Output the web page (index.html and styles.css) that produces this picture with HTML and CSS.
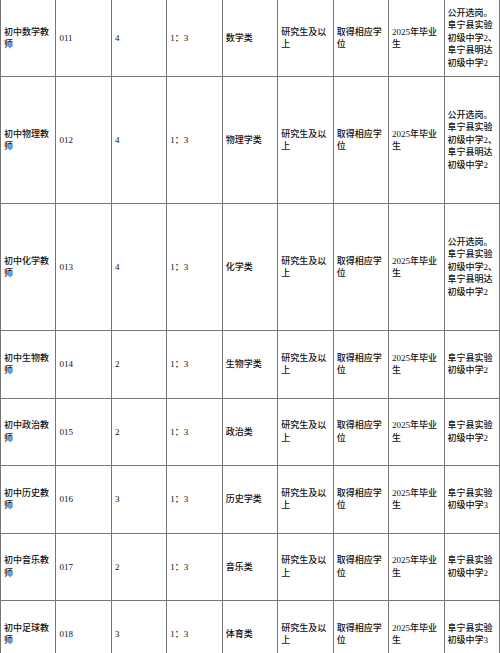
FILE: index.html
```html
<!DOCTYPE html>
<html lang="zh-CN">
<head>
<meta charset="utf-8">
<title>岗位表</title>
<link rel="stylesheet" href="styles.css">
</head>
<body>
<table class="jobs">
  <colgroup>
    <col><col><col><col><col><col><col><col><col>
  </colgroup>
  <tbody>
    <tr class="row-first">
      <td>初中数学教师</td><td>011</td><td>4</td><td>1：3</td><td>数学类</td><td>研究生及以上</td><td>取得相应学位</td><td>2025年毕业生</td>
      <td>公开选岗。<br>阜宁县实验<br>初级中学2、<br>阜宁县明达<br>初级中学2</td>
    </tr>
    <tr class="row-tall">
      <td>初中物理教师</td><td>012</td><td>4</td><td>1：3</td><td>物理学类</td><td>研究生及以上</td><td>取得相应学位</td><td>2025年毕业生</td>
      <td>公开选岗。<br>阜宁县实验<br>初级中学2、<br>阜宁县明达<br>初级中学2</td>
    </tr>
    <tr class="row-tall">
      <td>初中化学教师</td><td>013</td><td>4</td><td>1：3</td><td>化学类</td><td>研究生及以上</td><td>取得相应学位</td><td>2025年毕业生</td>
      <td>公开选岗。<br>阜宁县实验<br>初级中学2、<br>阜宁县明达<br>初级中学2</td>
    </tr>
    <tr class="row-short">
      <td>初中生物教师</td><td>014</td><td>2</td><td>1：3</td><td>生物学类</td><td>研究生及以上</td><td>取得相应学位</td><td>2025年毕业生</td>
      <td>阜宁县实验<br>初级中学2</td>
    </tr>
    <tr class="row-short">
      <td>初中政治教师</td><td>015</td><td>2</td><td>1：3</td><td>政治类</td><td>研究生及以上</td><td>取得相应学位</td><td>2025年毕业生</td>
      <td>阜宁县实验<br>初级中学2</td>
    </tr>
    <tr class="row-short">
      <td>初中历史教师</td><td>016</td><td>3</td><td>1：3</td><td>历史学类</td><td>研究生及以上</td><td>取得相应学位</td><td>2025年毕业生</td>
      <td>阜宁县实验<br>初级中学3</td>
    </tr>
    <tr class="row-short">
      <td>初中音乐教师</td><td>017</td><td>2</td><td>1：3</td><td>音乐类</td><td>研究生及以上</td><td>取得相应学位</td><td>2025年毕业生</td>
      <td>阜宁县实验<br>初级中学2</td>
    </tr>
    <tr class="row-short">
      <td>初中足球教师</td><td>018</td><td>3</td><td>1：3</td><td>体育类</td><td>研究生及以上</td><td>取得相应学位</td><td>2025年毕业生</td>
      <td>阜宁县实验<br>初级中学3</td>
    </tr>
  </tbody>
</table>
</body>
</html>
```
FILE: styles.css
```css
html, body {
  margin: 0;
  padding: 0;
  background: #ffffff;
}

body {
  font-family: "Liberation Serif", "Noto Sans CJK SC", serif;
  font-size: 9px;
  font-weight: 500;
  line-height: 12.5px;
  color: #111111;
  overflow: hidden;
}

.jobs {
  width: 500px;
  table-layout: fixed;
  border-collapse: collapse;
}

.jobs td {
  border: 1px solid #757575;
  padding: 0 2px 0 3px;
  vertical-align: middle;
  text-align: left;
  word-break: break-all;
}

.row-first td {
  border-top: none;
  height: 76px;
}

.row-tall td {
  height: 126px;
}

.row-short td {
  height: 66.5px;
}
```
